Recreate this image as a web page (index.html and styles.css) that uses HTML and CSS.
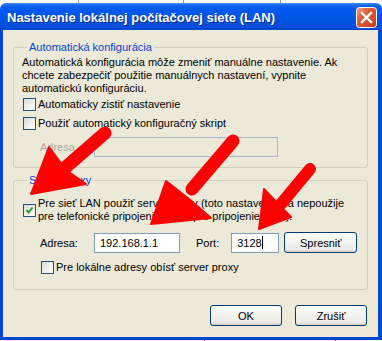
FILE: index.html
```html
<!DOCTYPE html>
<html lang="sk">
<head>
  <meta charset="UTF-8">
  <meta name="viewport" content="width=device-width, initial-scale=1.0">
  <title>Nastavenie lokálnej počítačovej siete (LAN)</title>
  <link rel="stylesheet" href="styles.css">
</head>
<body>
  <div class="strip"></div>
  <div class="window">
    <div class="titlebar">
      <span class="title">Nastavenie lokálnej počítačovej siete (LAN)</span>
      <svg class="close" width="21" height="21" viewBox="0 0 21 21">
        <defs>
          <linearGradient id="cg" x1="0" y1="0" x2="1" y2="1">
            <stop offset="0" stop-color="#f0a08a"/>
            <stop offset="0.35" stop-color="#e2603c"/>
            <stop offset="1" stop-color="#c2391a"/>
          </linearGradient>
        </defs>
        <rect x="0.5" y="0.5" width="20" height="20" rx="3" fill="url(#cg)" stroke="#fff"/>
        <path d="M6 6 L15 15 M15 6 L6 15" stroke="#fff" stroke-width="2.4" stroke-linecap="square"/>
      </svg>
    </div>

    <div class="client">
      <fieldset class="group">
        <legend>Automatická konfigurácia</legend>
        <p class="info">Automatická konfigurácia môže zmeniť manuálne nastavenie. Ak chcete zabezpečiť použitie manuálnych nastavení, vypnite automatickú konfiguráciu.</p>
        <div class="check-row">
          <span class="box"></span>
          <span>Automaticky zistiť nastavenie</span>
        </div>
        <div class="check-row">
          <span class="box"></span>
          <span>Použiť automatický konfiguračný skript</span>
        </div>
        <div class="field-row">
          <span class="field-label disabled">Adresa</span>
          <div class="field field-wide disabled"></div>
        </div>
      </fieldset>

      <fieldset class="group group-proxy">
        <legend>Server proxy</legend>
        <div class="check-row check-multi">
          <span class="box checked">
            <svg width="11" height="11" viewBox="0 0 11 11"><path d="M2.5 5 L4.5 7.5 L8.5 2.5" fill="none" stroke="#21a121" stroke-width="2"/></svg>
          </span>
          <span>Pre sieť LAN použiť server proxy (toto nastavenie sa nepoužije pre telefonické pripojenie alebo pre pripojenie VPN).</span>
        </div>
        <div class="field-row proxy-row">
          <span class="field-label">Adresa:</span>
          <div class="field field-addr">192.168.1.1</div>
          <span class="field-label port-label">Port:</span>
          <div class="field field-port">3128<span class="caret"></span></div>
          <button class="btn btn-small">Spresniť</button>
        </div>
        <div class="check-row check-sub">
          <span class="box"></span>
          <span>Pre lokálne adresy obísť server proxy</span>
        </div>
      </fieldset>

      <div class="actions">
        <button class="btn btn-ok">OK</button>
        <button class="btn">Zrušiť</button>
      </div>
    </div>
  </div>
  <div class="strip strip-bottom"></div>

  <!-- red arrows painted over the dialog -->
  <svg class="arrows" width="382" height="341" viewBox="0 0 382 341">
    <g fill="#ff0000" stroke="#ff0000" stroke-linejoin="round">
      <line x1="105" y1="133" x2="66" y2="167" stroke-width="13" stroke-linecap="round"/>
      <polygon points="31,194 49,147 66,170 86,184" stroke-width="2"/>

      <line x1="233" y1="141" x2="192" y2="189" stroke-width="13" stroke-linecap="round"/>
      <polygon points="151,224 166,181 189,199 211,218" stroke-width="2"/>

      <line x1="310" y1="169" x2="281" y2="204" stroke-width="12" stroke-linecap="round"/>
      <polygon points="259,229 264,189 281,207 291,217" stroke-width="2"/>
    </g>
  </svg>
</body>
</html>
```

FILE: styles.css
```css
* {
  margin: 0;
  padding: 0;
  box-sizing: border-box;
}
body {
  width: 382px;
  height: 341px;
  overflow: hidden;
  position: relative;
  background-color: #fff;
  font-family: "Liberation Sans", Arial, sans-serif;
  font-size: 11px;
  color: #000;
}
.strip {
  height: 3px;
  background:
    linear-gradient(#a0a0a0, #a0a0a0) 78px 0 / 1px 3px no-repeat,
    linear-gradient(#a0a0a0, #a0a0a0) 183px 0 / 1px 3px no-repeat,
    linear-gradient(#a0a0a0, #a0a0a0) 280px 0 / 1px 3px no-repeat,
    #fff;
}
.strip-bottom {
  height: 2px;
  background:
    linear-gradient(#404040, #404040) 204px 0 / 1px 2px no-repeat,
    linear-gradient(#404040, #404040) 335px 0 / 1px 2px no-repeat,
    #fff;
}
.window {
  width: 382px;
}
.titlebar {
  height: 27px;
  display: flex;
  align-items: center;
  justify-content: space-between;
  padding: 0 5px 0 7px;
  border-radius: 6px 6px 0 0;
  background: linear-gradient(#3d8cf5 0, #0a5fef 3px, #0058ee 8px, #0055e5 16px, #0050de 22px, #0046cf 27px);
}
.title {
  color: #fff;
  font-weight: bold;
  font-size: 13px;
  text-shadow: 1px 1px #0b2a8a;
  padding-top: 1px;
}
.close {
  display: block;
  margin-top: 2px;
}
.client {
  background-color: #ece9d8;
  border-style: solid;
  border-color: #0047d6;
  border-width: 0 4px 3px 3px;
  padding: 11px 10px 11px 10px;
}
.group {
  border: 1px solid #d0d0bf;
  border-radius: 3px;
  padding: 2px 8px 10px 8px;
}
.group legend {
  color: #0046d5;
  line-height: 13px;
  padding: 0 2px;
  margin-left: 5px;
}
.group-proxy {
  margin-top: 6px;
  padding-top: 10px;
  padding-bottom: 12px;
}
.info {
  line-height: 13px;
}
.check-row {
  display: flex;
  align-items: center;
  gap: 2px;
  height: 19px;
  line-height: 13px;
}
.check-multi {
  height: 26px;
}
.check-sub {
  margin-top: 5px;
  padding-left: 18px;
}
.box {
  flex: none;
  width: 13px;
  height: 13px;
  margin-left: 1px;
  border: 1px solid #1c5180;
  background: linear-gradient(135deg, #dcdcd7 0, #f2f2ee 60%, #fff 100%);
  display: flex;
  align-items: center;
  justify-content: center;
}
.field-row {
  display: flex;
  align-items: center;
  margin-top: 4px;
  padding-left: 18px;
}
.proxy-row {
  margin-top: 9px;
}
.field-label {
  width: 54px;
}
.disabled {
  color: #aca899;
}
.field {
  height: 20px;
  border: 1px solid #7f9db9;
  background-color: #fff;
  padding: 0 5px;
  line-height: 18px;
  display: flex;
  align-items: center;
}
.field.disabled {
  background-color: #ece9d8;
  border-color: #a5b9d2;
}
.field-wide {
  width: 184px;
}
.field-addr {
  width: 86px;
}
.port-label {
  width: auto;
  margin: 0 12px 0 16px;
}
.field-port {
  width: 48px;
}
.caret {
  display: inline-block;
  width: 1px;
  height: 13px;
  background-color: #000;
}
.btn {
  width: 72px;
  height: 21px;
  font-family: inherit;
  font-size: 11px;
  color: #000;
  border: 1px solid #003c74;
  border-radius: 3px;
  background: linear-gradient(#fff 0, #f4f4f0 40%, #ecebe6 85%, #d6d0c5 100%);
}
.btn-small {
  width: 73px;
  margin-left: 5px;
}
.actions {
  display: flex;
  justify-content: flex-end;
  gap: 13px;
  margin-top: 15px;
  padding-right: 1px;
}
.arrows {
  position: absolute;
  left: 0;
  top: 0;
  pointer-events: none;
}
```
